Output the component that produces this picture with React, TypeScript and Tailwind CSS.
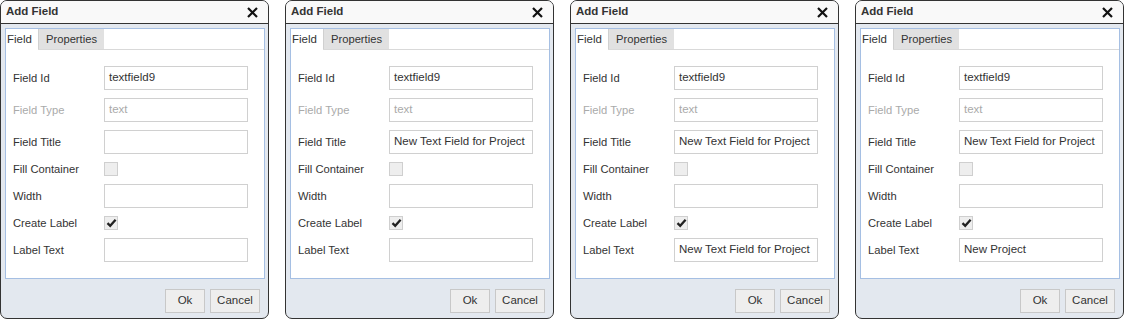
import React from "react";

type D = { title: string; label: string };

const dialogs: D[] = [
  { title: "", label: "" },
  { title: "New Text Field for Project", label: "" },
  { title: "New Text Field for Project", label: "New Text Field for Project" },
  { title: "New Text Field for Project", label: "New Project" },
];

function Input({ value, disabled }: { value: string; disabled?: boolean }) {
  return (
    <div
      className={`w-[144px] h-[24px] border border-[#d0d0d0] bg-white pl-[4px] flex items-center text-[11.5px] whitespace-nowrap overflow-hidden ${
        disabled ? "text-[#aaaaaa]" : "text-[#333333]"
      }`}
    >
      {value}
    </div>
  );
}

function Check({ checked }: { checked?: boolean }) {
  return (
    <div className="w-[14px] h-[14px] border border-[#cfcfcf] bg-[#eeeeee] flex items-center justify-center">
      {checked && (
        <svg width="11" height="10" viewBox="0 0 11 10">
          <path d="M1.5 5.2 L4.2 7.8 L9.6 1.8" fill="none" stroke="#222" strokeWidth="2.3" />
        </svg>
      )}
    </div>
  );
}

function Row({ label, children, gray, h = "h-[24px]" }: { label: string; children: React.ReactNode; gray?: boolean; h?: string }) {
  return (
    <div className={`flex items-center ${h}`}>
      <div className={`w-[91px] text-[11.2px] ${gray ? "text-[#aaaaaa]" : "text-[#333333]"}`}>{label}</div>
      {children}
    </div>
  );
}

function Dialog({ d }: { d: D }) {
  return (
    <div className="w-[269px] h-[319px] border border-[#333333] rounded-[7px] overflow-hidden flex flex-col bg-[#e3e8ef] shrink-0">
      <div className="h-[23px] bg-[#f9f9f9] border-b border-[#333333] flex items-center justify-between pl-[5px] pr-[10px] shrink-0">
        <span className="text-[11.5px] font-bold text-[#333333]">Add Field</span>
        <svg width="11" height="11" viewBox="0 0 11 11">
          <path d="M1 1 L10 10 M10 1 L1 10" stroke="#111" strokeWidth="2.2" />
        </svg>
      </div>
      <div className="pt-[4px] pl-[4px]">
        <div className="w-[260px] h-[251px] border border-[#a5bfe3] bg-white flex flex-col">
          <div className="flex h-[21px] border-b border-[#d9d9d9] shrink-0">
            <div className="w-[32px] h-[21px] bg-white text-[11.5px] text-[#333333] pl-[1px] flex items-center -mb-px">Field</div>
            <div className="w-[66px] bg-[#e1e1e1] border-l border-[#d0d0d0] text-[11.2px] text-[#333333] flex items-center justify-center">Properties</div>
          </div>
          <div className="pl-[7px] pt-[16px] flex flex-col gap-[8px]">
            <Row label="Field Id"><Input value="textfield9" /></Row>
            <Row label="Field Type" gray><Input value="text" disabled /></Row>
            <Row label="Field Title"><Input value={d.title} /></Row>
            <Row label="Fill Container" h="h-[14px]"><Check /></Row>
            <Row label="Width"><Input value="" /></Row>
            <Row label="Create Label" h="h-[14px]"><Check checked /></Row>
            <Row label="Label Text"><Input value={d.label} /></Row>
          </div>
        </div>
      </div>
      <div className="flex justify-end gap-[5px] pr-[8px] pt-[10px]">
        <div className="w-[40px] h-[24px] border border-[#c8c8c8] bg-[#eeeeee] text-[11.5px] text-[#333333] flex items-center justify-center">Ok</div>
        <div className="w-[50px] h-[24px] border border-[#c8c8c8] bg-[#eeeeee] text-[11.5px] text-[#333333] flex items-center justify-center">Cancel</div>
      </div>
    </div>
  );
}

export default function App() {
  return (
    <div className="w-[1124px] h-[320px] bg-white flex gap-[16px]" style={{ fontFamily: '"Liberation Sans", Arial, sans-serif' }}>
      {dialogs.map((d, i) => (
        <Dialog key={i} d={d} />
      ))}
    </div>
  );
}
